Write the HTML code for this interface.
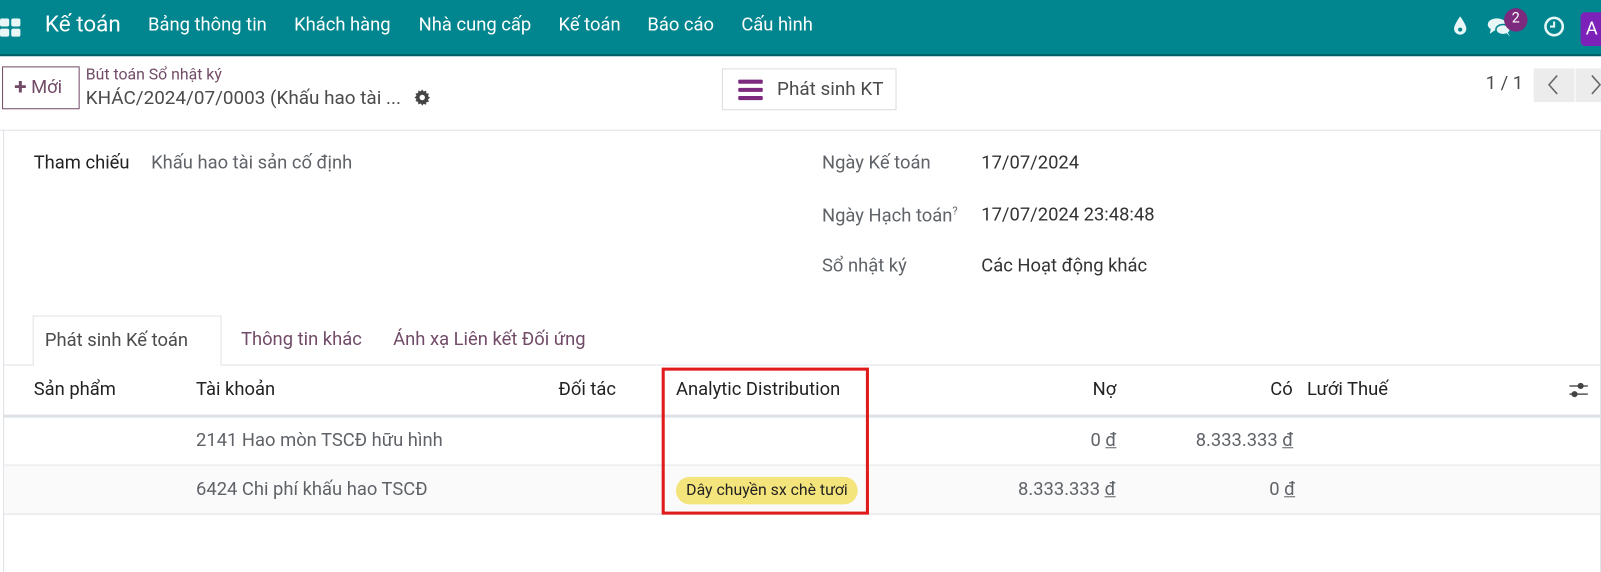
<!DOCTYPE html>
<html><head><meta charset="utf-8"><style>
*{box-sizing:border-box;margin:0;padding:0}
body{width:1601px;height:560px;overflow:hidden;background:#fff;font-family:"Roboto","Liberation Sans",sans-serif;font-size:18px;color:#374151;position:relative}
#w{position:absolute;left:0;top:0;width:1568px;height:549px;transform:scale(1.0211);transform-origin:0 0}
.a{position:absolute;white-space:nowrap}
.nav{position:absolute;left:0;top:0;width:1601px;height:55px;background:#01868f;border-bottom:2px solid #015f66}
.nav .a{color:#fff;top:14px;font-size:18px}
.line{position:absolute;background:#dee2e6}
.mut{color:#5f6368}
.pur{color:#714b67}
</style></head><body><div id="w">
<div class="nav">
  <svg class="a" style="left:0;top:18px" width="22" height="18"><rect x="0" y="0" width="9" height="8" rx="2" fill="#e8f6f6"/><rect x="11" y="0" width="9" height="8" rx="2" fill="#e8f6f6"/><rect x="0" y="10" width="9" height="8" rx="2" fill="#e8f6f6"/><rect x="11" y="10" width="9" height="8" rx="2" fill="#e8f6f6"/></svg>
  <div class="a" style="left:44px;top:12px;font-size:22px">Kế toán</div>
  <div class="a" style="left:145px">Bảng thông tin</div>
  <div class="a" style="left:288px">Khách hàng</div>
  <div class="a" style="left:410px">Nhà cung cấp</div>
  <div class="a" style="left:547px">Kế toán</div>
  <div class="a" style="left:634px">Báo cáo</div>
  <div class="a" style="left:726px">Cấu hình</div>
  <svg class="a" style="left:1422px;top:15px" width="16" height="20"><path d="M8 1 C8 1 2 9 2 13 A6 6 0 0 0 14 13 C14 9 8 1 8 1Z" fill="#e8f6f6"/><circle cx="8" cy="14" r="2" fill="#01868f"/></svg>
  <svg class="a" style="left:1456px;top:16px" width="28" height="22"><ellipse cx="10" cy="8" rx="9" ry="6" fill="#e8f6f6"/><path d="M4 12 L3 17 L9 13Z" fill="#e8f6f6"/><ellipse cx="16" cy="13" rx="7" ry="5" fill="#e8f6f6" stroke="#01868f" stroke-width="1.5"/><path d="M19 16 L23 20 L20 15Z" fill="#e8f6f6"/></svg>
  <div class="a" style="left:1473px;top:8px;width:23px;height:23px;border-radius:50%;background:#7b2a7d;color:#fff;font-size:14px;text-align:center;line-height:21px">2</div>
  <svg class="a" style="left:1511px;top:15px" width="22" height="22"><circle cx="11" cy="11" r="8.5" fill="none" stroke="#e8f6f6" stroke-width="2.5"/><path d="M11 6 V11 H7" fill="none" stroke="#e8f6f6" stroke-width="2"/></svg>
  <div class="a" style="left:1548px;top:12px;width:30px;height:33px;border-radius:4px;background:#7d22b8;color:#fff;padding-left:5px;line-height:33px">A</div>
</div>
<div class="a pur" style="left:2px;top:65px;width:76px;height:42px;border:1px solid #714b67;font-size:18px;line-height:40px;padding-left:11px"><b style="font-size:22px;vertical-align:-1px">+</b> Mới</div>
<div class="a pur" style="left:84px;top:64px;font-size:15.5px">Bút toán Sổ nhật ký</div>
<div class="a" style="left:84px;top:85px;font-size:18.5px;color:#4b4b4b">KHÁC/2024/07/0003 (Khấu hao tài ...</div>
<svg class="a" style="left:405px;top:87px" width="17" height="17" viewBox="0 0 16 16"><path d="M8 0.5l1.3 2 2.3-.8.2 2.4 2.4.4-.9 2.2 1.9 1.5-1.9 1.5.9 2.2-2.4.4-.2 2.4-2.3-.8L8 15.5l-1.3-2-2.3.8-.2-2.4-2.4-.4.9-2.2L.8 8l1.9-1.5-.9-2.2 2.4-.4.2-2.4 2.3.8z" fill="#444"/><circle cx="8" cy="8" r="2.5" fill="#fff"/></svg>
<div class="a" style="left:707px;top:67px;width:171px;height:41px;border:1px solid #dcdcdc;font-size:18.5px;line-height:39px;padding-left:53px;color:#4b4b4b">Phát sinh KT</div>
<div class="a" style="left:723px;top:78px;width:24px;height:4px;background:#7b2a7d;border-radius:1px"></div>
<div class="a" style="left:723px;top:86px;width:24px;height:4px;background:#7b2a7d;border-radius:1px"></div>
<div class="a" style="left:723px;top:94px;width:24px;height:4px;background:#7b2a7d;border-radius:1px"></div>
<div class="a" style="left:1455px;top:71px;font-size:18px;color:#4b4b4b">1 / 1</div>
<div class="a" style="left:1502px;top:67px;width:40px;height:33px;background:#ececec"></div>
<div class="a" style="left:1543px;top:67px;width:60px;height:33px;background:#ececec"></div>
<svg class="a" style="left:1514px;top:72px" width="14" height="22"><path d="M11 2 L3 11 L11 20" fill="none" stroke="#666" stroke-width="1.5"/></svg>
<svg class="a" style="left:1556px;top:72px" width="14" height="22"><path d="M3 2 L11 11 L3 20" fill="none" stroke="#666" stroke-width="1.5"/></svg>
<div class="line" style="left:0;top:127px;width:1601px;height:1px"></div>
<div class="line" style="left:3px;top:127px;width:1px;height:433px"></div>
<div class="line" style="left:1567px;top:127px;width:1px;height:433px"></div>
<div class="a" style="left:33px;top:149px;color:#222">Tham chiếu</div>
<div class="a mut" style="left:148px;top:149px">Khấu hao tài sản cố định</div>
<div class="a mut" style="left:805px;top:149px">Ngày Kế toán</div>
<div class="a" style="left:961px;top:149px;color:#333">17/07/2024</div>
<div class="a mut" style="left:805px;top:200px">Ngày Hạch toán<sup style="font-size:11px">?</sup></div>
<div class="a" style="left:961px;top:200px;color:#333">17/07/2024 23:48:48</div>
<div class="a mut" style="left:805px;top:250px">Sổ nhật ký</div>
<div class="a" style="left:961px;top:250px;color:#333">Các Hoạt động khác</div>
<div class="line" style="left:3px;top:357px;width:1565px;height:1px"></div>
<div class="a" style="left:32px;top:309px;width:185px;height:49px;border:1px solid #dee2e6;border-bottom:none;background:#fff;padding:13px 0 0 11px;color:#4b4b4b">Phát sinh Kế toán</div>
<div class="a pur" style="left:236px;top:322px">Thông tin khác</div>
<div class="a pur" style="left:385px;top:322px">Ánh xạ Liên kết Đối ứng</div>
<div class="a" style="left:33px;top:371px;color:#222">Sản phẩm</div>
<div class="a" style="left:192px;top:371px;color:#222">Tài khoản</div>
<div class="a" style="left:547px;top:371px;color:#222">Đối tác</div>
<div class="a" style="left:662px;top:371px;color:#222">Analytic Distribution</div>
<div class="a" style="left:1070px;top:371px;color:#222">Nợ</div>
<div class="a" style="left:1244px;top:371px;color:#222">Có</div>
<div class="a" style="left:1280px;top:371px;color:#222">Lưới Thuế</div>
<svg class="a" style="left:1535px;top:373px" width="22" height="18"><path d="M2 5H20M2 13H20" stroke="#555" stroke-width="1.5"/><circle cx="13" cy="5" r="3" fill="#444"/><circle cx="7" cy="13" r="3" fill="#444"/></svg>
<div class="line" style="left:3px;top:406px;width:1565px;height:3px"></div>
<div class="a mut" style="left:192px;top:421px">2141 Hao mòn TSCĐ hữu hình</div>
<div class="a mut" style="left:1068px;top:421px">0 <u>đ</u></div>
<div class="a mut" style="left:1171px;top:421px">8.333.333 <u>đ</u></div>
<div class="line" style="left:3px;top:455px;width:1565px;height:1px"></div>
<div class="a" style="left:4px;top:456px;width:1563px;height:47px;background:#fafafa"></div>
<div class="a mut" style="left:192px;top:469px">6424 Chi phí khấu hao TSCĐ</div>
<div class="a" style="left:662px;top:467px;height:27px;padding:0 10px;border-radius:14px;background:#f4e47c;color:#222;font-size:15.5px;line-height:27px">Dây chuyền sx chè tươi</div>
<div class="a mut" style="left:997px;top:469px">8.333.333 <u>đ</u></div>
<div class="a mut" style="left:1243px;top:469px">0 <u>đ</u></div>
<div class="line" style="left:3px;top:503px;width:1565px;height:1px"></div>
<div class="a" style="left:648px;top:360px;width:203px;height:144px;border:3px solid #e01b1b"></div>
</div></body></html>
